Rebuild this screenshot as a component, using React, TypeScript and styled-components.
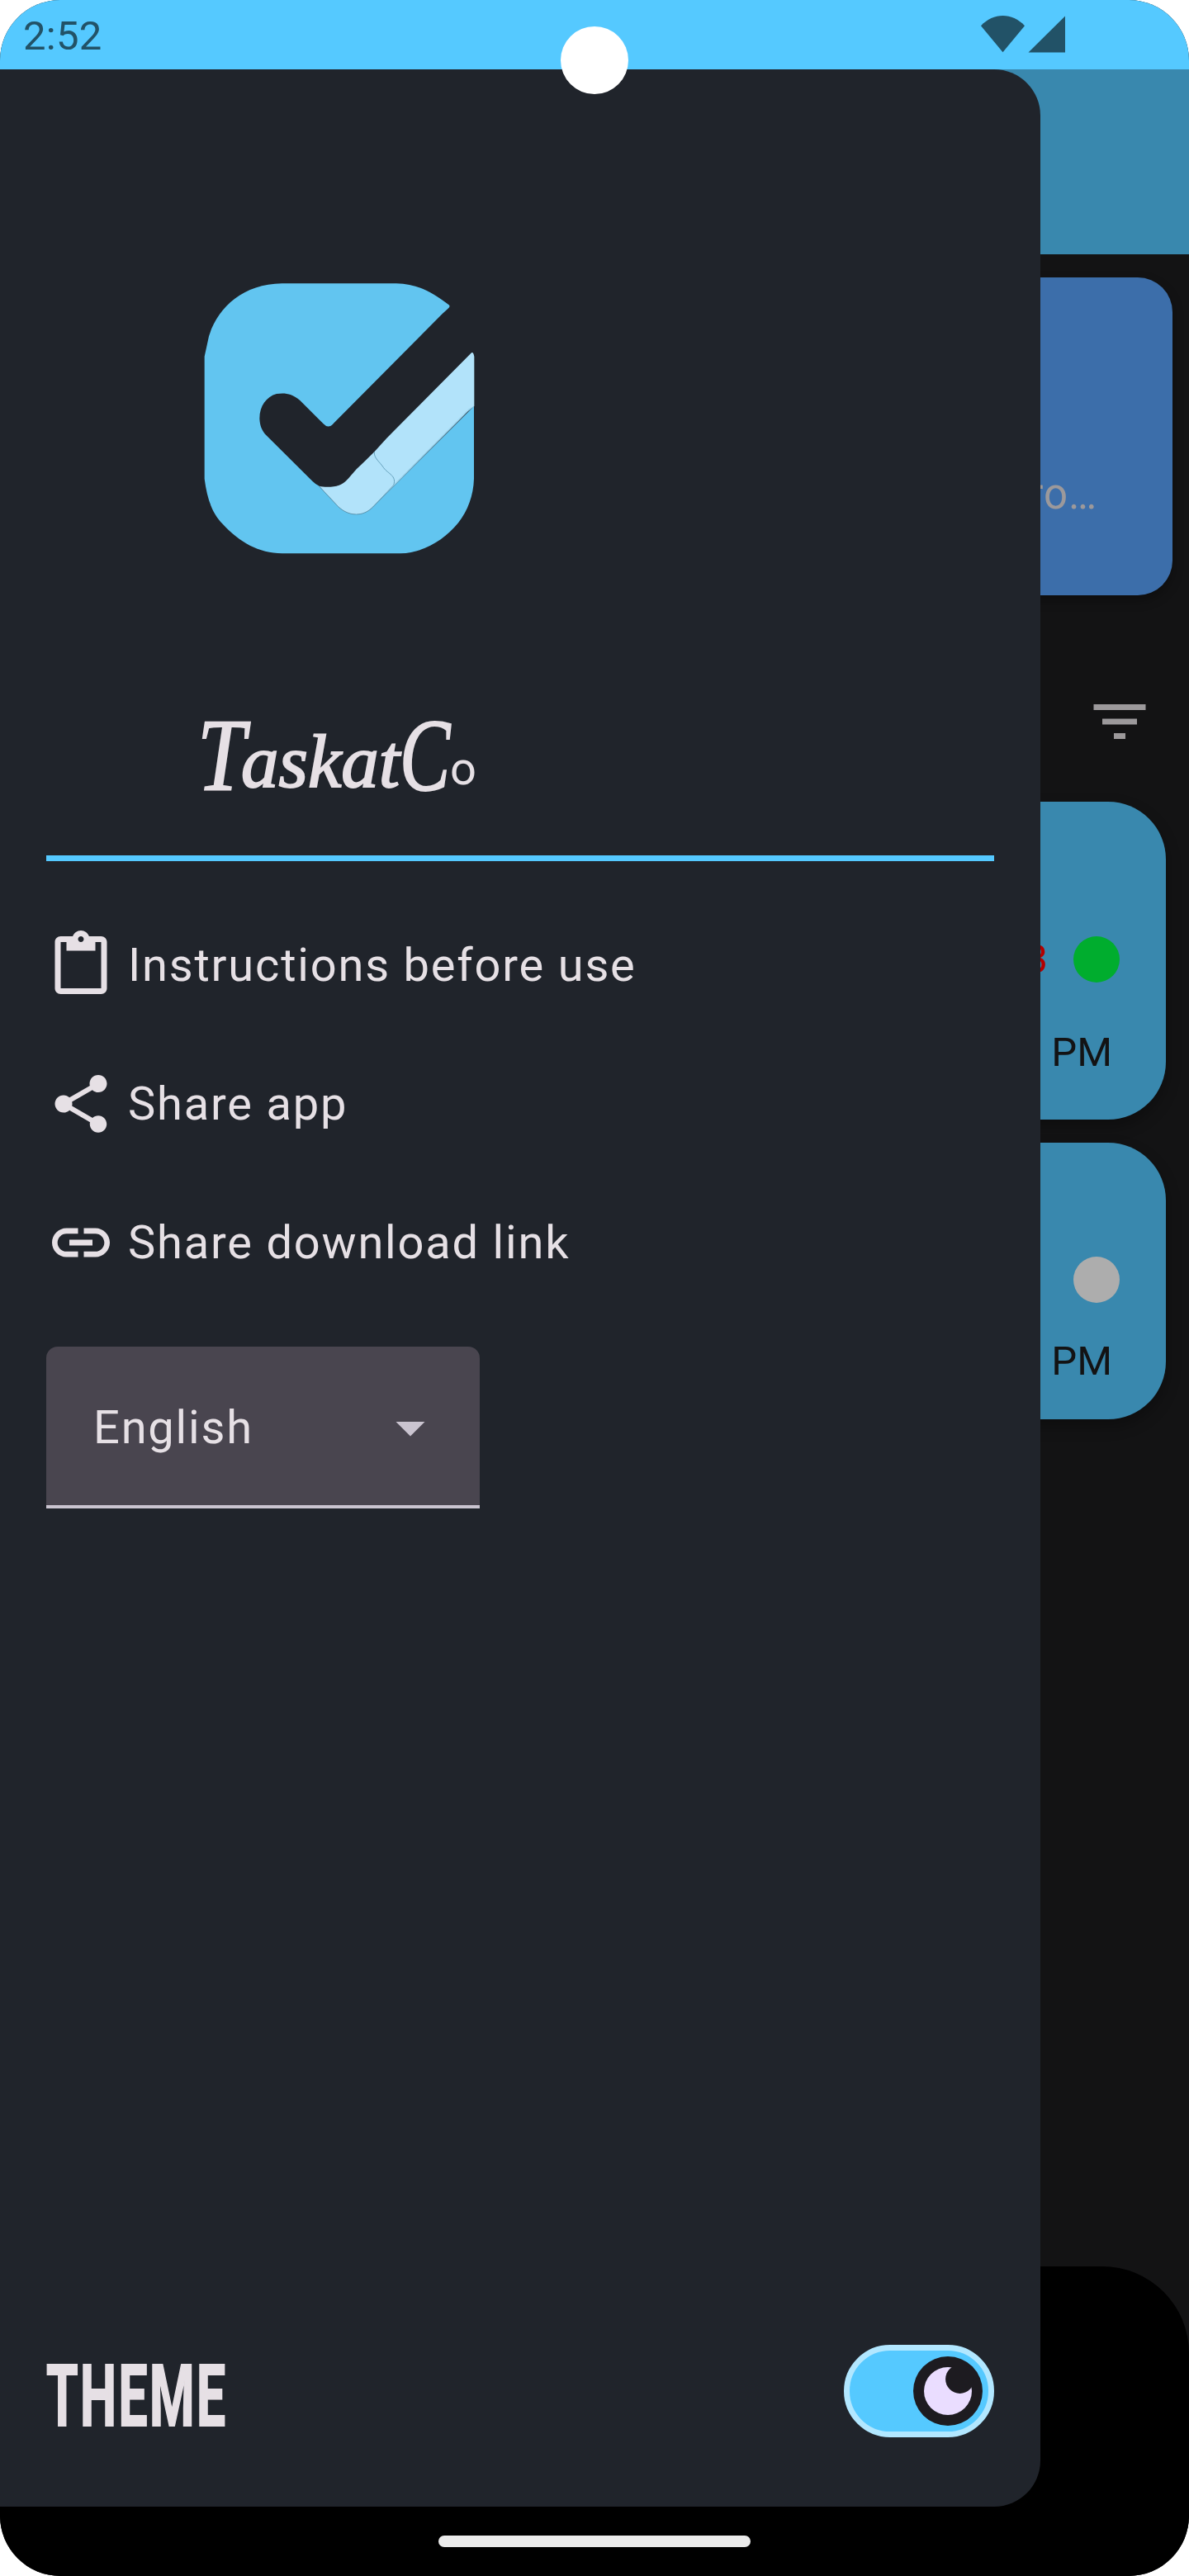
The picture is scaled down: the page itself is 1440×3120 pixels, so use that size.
import React from "react";
import styled, { createGlobalStyle } from "styled-components";
import {
  MdArrowDropDown,
  MdContentPaste,
  MdFilterList,
  MdInsertLink,
  MdShare,
} from "react-icons/md";

const color = {
  sky: "#55c9ff",
  skyPale: "#b2e7ff",
  skyDim: "#3988ae",
  indigoDim: "#3c6eaa",
  drawer: "#20242b",
  ink: "#131314",
  text: "#e6e0e5",
  textDim: "#9c999b",
  field: "#49454f",
  fieldLine: "#cac4d0",
};

const GlobalStyle = createGlobalStyle`
  *, *::before, *::after { box-sizing: border-box; }
  body { margin: 0; background: #fff; }
`;

const Screen = styled.div`
  position: relative;
  display: flex;
  flex-direction: column;
  width: 1440px;
  height: 3120px;
  overflow: hidden;
  border-radius: 73px;
  background: ${color.ink};
  font-family: Roboto, "Noto Sans", sans-serif;
`;

const StatusBar = styled.header`
  display: flex;
  flex: none;
  justify-content: space-between;
  height: 84px;
  padding: 15px 150px 0 28px;
  background: ${color.sky};
  color: #225267;
`;

const Clock = styled.span`
  font-size: 49px;
  line-height: 57px;
  letter-spacing: 0.3px;
`;

const StatusIcons = styled.svg`
  width: 102px;
  height: 45px;
  margin-top: 4px;
  fill: currentColor;
`;

const Camera = styled.div`
  position: absolute;
  z-index: 3;
  top: 32px;
  left: 679px;
  width: 82px;
  height: 82px;
  border-radius: 50%;
  background: #fff;
`;

const Page = styled.main`
  display: flex;
  flex: 1;
  flex-direction: column;
`;

const AppBar = styled.div`
  flex: none;
  height: 224px;
  background: ${color.skyDim};
`;

const Summary = styled.section`
  display: flex;
  flex: none;
  align-items: flex-end;
  justify-content: flex-end;
  height: 385px;
  margin: 28px 20px 0;
  padding: 0 91px 94px;
  border-radius: 42px;
  background: ${color.indigoDim};
  box-shadow: 0 6px 14px rgba(0, 0, 0, 0.3);
  color: ${color.textDim};
  font-size: 51px;
  line-height: 57px;
  letter-spacing: 0.9px;
`;

const Toolbar = styled.div`
  display: flex;
  flex: none;
  align-items: center;
  justify-content: flex-end;
  height: 250px;
  padding: 56px 42px 0;
  color: ${color.textDim};
`;

const Tasks = styled.ul`
  display: flex;
  flex: none;
  flex-direction: column;
  gap: 28px;
  margin: 0;
  padding: 0 28px;
  list-style: none;
`;

const TaskCard = styled.li<{ $height: number }>`
  display: flex;
  flex-direction: column;
  align-items: flex-end;
  justify-content: flex-end;
  height: ${(p) => p.$height}px;
  border-radius: 70px;
  background: ${color.skyDim};
  box-shadow: 0 8px 18px rgba(0, 0, 0, 0.3);
  color: ${color.ink};
  font-size: 49px;
  line-height: 57px;
`;

const TaskStatus = styled.div`
  display: flex;
  align-items: center;
  gap: 31px;
  padding-right: 56px;
`;

const Count = styled.span`
  color: #b30000;
`;

const Dot = styled.i<{ $fill: string }>`
  width: 56px;
  height: 56px;
  border-radius: 50%;
  background: ${(p) => p.$fill};
`;

const TaskTime = styled.time<{ $top: number; $bottom: number }>`
  padding: ${(p) => p.$top}px 65px ${(p) => p.$bottom}px 0;
`;

const BottomNav = styled.nav`
  flex: none;
  height: 375px;
  margin-top: auto;
  border-radius: 105px 105px 0 0;
  background: #000;
`;

const HomeIndicator = styled.div`
  position: absolute;
  z-index: 3;
  bottom: 35px;
  left: 531px;
  width: 378px;
  height: 14px;
  border-radius: 7px;
  background: #ebebeb;
`;

const Drawer = styled.aside`
  position: absolute;
  z-index: 2;
  top: 84px;
  left: 0;
  display: flex;
  flex-direction: column;
  width: 1260px;
  height: 2952px;
  padding: 236px 56px 84px;
  border-radius: 0 56px 56px 0;
  background: ${color.drawer};
  color: ${color.text};
`;

const Logo = styled.svg`
  flex: none;
  width: 380px;
  height: 370px;
  margin-left: 164px;
`;

const Brand = styled.h1`
  display: flex;
  align-items: baseline;
  height: 197px;
  margin: 149px 0 0 183px;
  font-weight: 400;
  line-height: 140px;
`;

const Script = styled.span<{
  $size: number;
  $width: number;
  $stretch?: number;
  $drop: number;
}>`
  width: ${(p) => p.$width}px;
  transform: translateY(${(p) => p.$drop}px) scaleX(${(p) => p.$stretch ?? 1});
  transform-origin: left;
  font-family: "Liberation Serif", serif;
  font-size: ${(p) => p.$size}px;
  font-style: italic;
  -webkit-text-stroke: 2px currentColor;
`;

const BrandTail = styled.span`
  font-size: 56px;
`;

const Divider = styled.hr`
  flex: none;
  width: 100%;
  height: 7px;
  margin: 0;
  border: 0;
  background: ${color.sky};
`;

const Menu = styled.ul`
  display: flex;
  flex-direction: column;
  gap: 84px;
  margin: 84px 0;
  padding: 0;
  list-style: none;
`;

const MenuItem = styled.li`
  display: flex;
  align-items: center;
  gap: 15px;
  height: 84px;
  font-size: 56px;
  line-height: 84px;
  letter-spacing: 1.8px;
`;

const Select = styled.div`
  display: flex;
  flex: none;
  align-items: center;
  justify-content: space-between;
  width: 525px;
  height: 196px;
  padding: 4px 42px 0 57px;
  border-bottom: 4px solid ${color.fieldLine};
  border-radius: 14px 14px 0 0;
  background: ${color.field};
  font-size: 56px;
  letter-spacing: 1.8px;
`;

const Arrow = styled(MdArrowDropDown)`
  color: ${color.fieldLine};
`;

const ThemeRow = styled.div`
  display: flex;
  align-items: center;
  justify-content: space-between;
  height: 112px;
  margin-top: auto;
`;

const ThemeLabel = styled.span`
  width: 220px;
  margin-top: 13px;
  transform: scaleX(0.605);
  transform-origin: left;
  font-size: 103px;
  font-weight: 700;
  line-height: 112px;
  letter-spacing: 4px;
  -webkit-text-stroke: 2px currentColor;
`;

const Switch = styled.div`
  display: flex;
  align-items: center;
  justify-content: flex-end;
  width: 182px;
  height: 112px;
  padding: 7px;
  border: 7px solid ${color.skyPale};
  border-radius: 56px;
  background: ${color.sky};
`;

const tasks = [
  { height: 385, count: "3", dot: "#00ad2e", top: 56, bottom: 53 },
  { height: 335, count: "", dot: "#adadad", top: 42, bottom: 42 },
];

const entries = [
  { Icon: MdContentPaste, label: "Instructions before use" },
  { Icon: MdShare, label: "Share app" },
  { Icon: MdInsertLink, label: "Share download link" },
];

function AppLogo() {
  return (
    <Logo viewBox="0 0 1140 1110">
      <path
        fill="#62c5f0"
        d="M365 70H780C855 72 905 98 971 148Q976 153 971 158L945 182L610 520L552 578Q533 600 515 580L430 495C400 468 372 467 345 471C308 481 283 515 283 560C284 585 290 600 303 617L475 788Q487 800 500 806L570 882C610 918 660 918 695 882L1062 516V780C1060 840 1040 895 1005 940C950 1005 880 1048 795 1051H365C280 1050 210 1010 150 945C110 905 92 850 83 780V335L99 262C130 160 220 72 365 70Z"
      />
      <path
        fill="#b2e3fa"
        d="M1053 322Q1060 318 1063 336V516L1040 535L695 882C660 918 610 918 570 882L500 806C520 812 557 809 570 804Q588 798 605 779L635 745L665 716L700 682L745 632Z"
      />
      <path
        fill="none"
        stroke="#5794b0"
        strokeWidth="2.5"
        d="M700 682C698 705 720 718 734 740C750 762 782 768 770 803M500 808L570 882C610 918 660 918 695 882L770 803"
      />
      <path fill="none" stroke="#83c9e8" strokeWidth="2" d="M770 803L1040 530L1062 516" />
    </Logo>
  );
}

function Moon() {
  return (
    <svg width="84" height="84" viewBox="0 0 84 84">
      <circle cx="42" cy="42" r="42" fill="#1d1b20" />
      <circle cx="42" cy="42" r="29" fill="#eaddff" />
      <circle cx="56.5" cy="27.5" r="17.4" fill="#1d1b20" />
    </svg>
  );
}

export default function App() {
  return (
    <Screen>
      <GlobalStyle />
      <StatusBar>
        <Clock>2:52</Clock>
        <StatusIcons viewBox="0 0 102 45">
          <path d="M0 12.3C15-4 38-4 53 12.3L26.5 44.3Z" />
          <path d="M57.5 44.5L102 0.5V44.5Z" />
        </StatusIcons>
      </StatusBar>
      <Camera />

      <Page>
        <AppBar />
        <Summary>ro…</Summary>
        <Toolbar>
          <MdFilterList size={84} />
        </Toolbar>
        <Tasks>
          {tasks.map((t) => (
            <TaskCard key={t.dot} $height={t.height}>
              <TaskStatus>
                {t.count && <Count>{t.count}</Count>}
                <Dot $fill={t.dot} />
              </TaskStatus>
              <TaskTime $top={t.top} $bottom={t.bottom}>
                PM
              </TaskTime>
            </TaskCard>
          ))}
        </Tasks>
        <BottomNav />
      </Page>

      <Drawer>
        <AppLogo />
        <Brand>
          <Script $size={124} $width={53} $stretch={0.84} $drop={7}>T</Script>
          <Script $size={91} $width={192} $drop={3}>askat</Script>
          <Script $size={124} $width={61} $stretch={0.74} $drop={7}>C</Script>
          <BrandTail>o</BrandTail>
        </Brand>
        <Divider />
        <Menu>
          {entries.map(({ Icon, label }) => (
            <MenuItem key={label}>
              <Icon size={84} />
              {label}
            </MenuItem>
          ))}
        </Menu>
        <Select>
          English
          <Arrow size={84} />
        </Select>
        <ThemeRow>
          <ThemeLabel>THEME</ThemeLabel>
          <Switch>
            <Moon />
          </Switch>
        </ThemeRow>
      </Drawer>
      <HomeIndicator />
    </Screen>
  );
}
